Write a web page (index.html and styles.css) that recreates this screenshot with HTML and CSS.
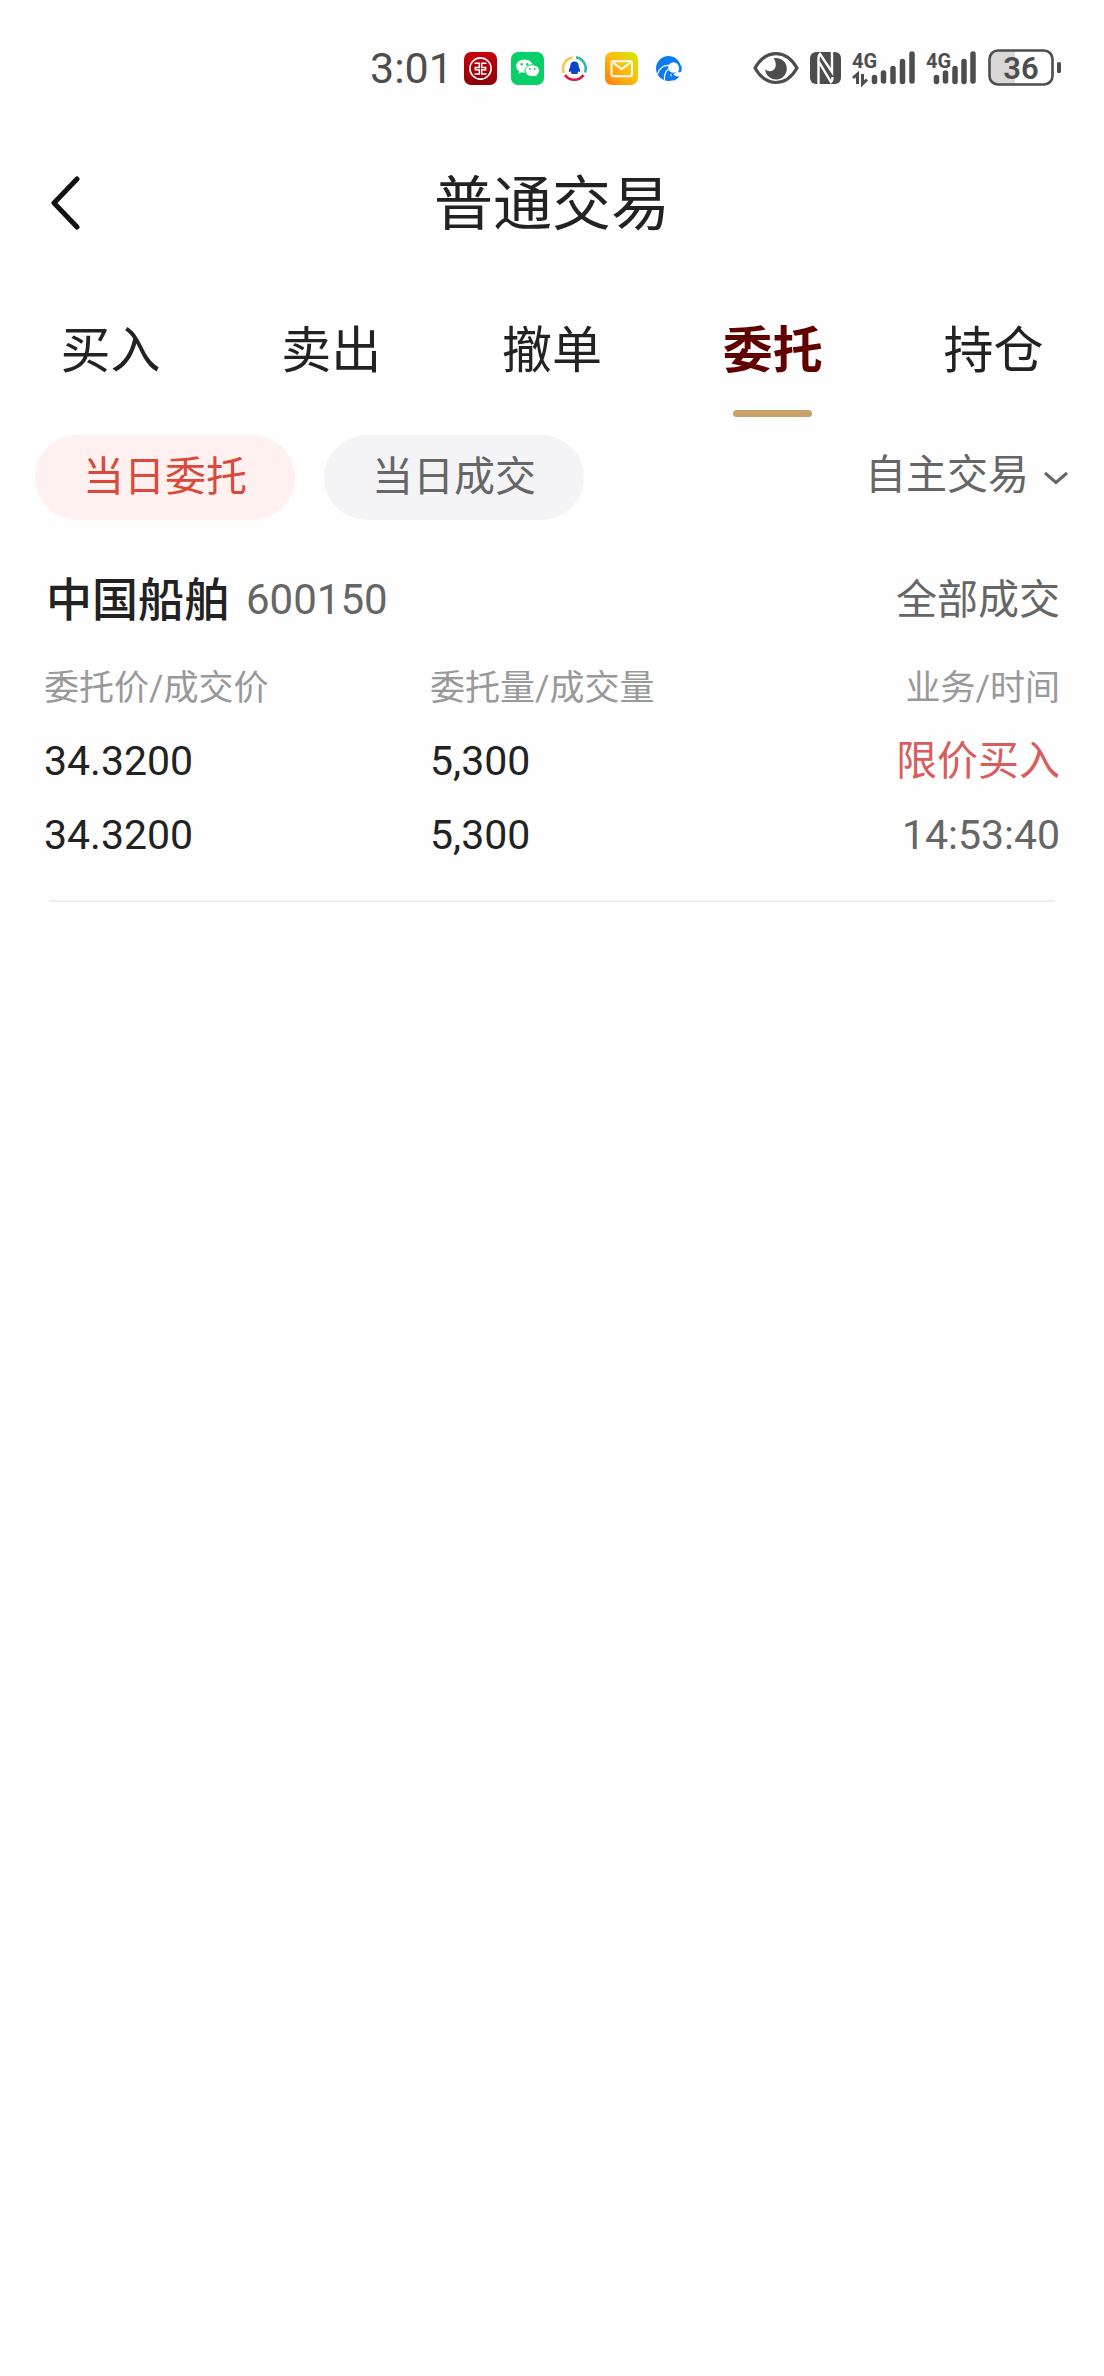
FILE: index.html
```html
<!DOCTYPE html>
<html lang="zh-CN">
<head>
<meta charset="utf-8">
<meta name="viewport" content="width=device-width, initial-scale=1">
<title>普通交易</title>
<link rel="stylesheet" href="styles.css">
</head>
<body>
<div class="status">
  <div class="status-left">
    <time class="clock">3:01</time>
    <svg class="app" viewBox="0 0 33 33" aria-hidden="true">
      <defs><linearGradient id="red" x1="0" y1="0" x2="0" y2="1"><stop offset="0" stop-color="#c8000c"/><stop offset="1" stop-color="#8c0008"/></linearGradient></defs>
      <rect width="33" height="33" rx="7" fill="url(#red)"/>
      <circle cx="16.500" cy="16.500" r="10.600" fill="none" stroke="#fff" stroke-width="1.600"/>
      <path d="M10.500 11.200h4.800v4.200h-4v2.400h4v4.200h-4.800M22.500 11.200h-4.800v4.200h4v2.400h-4v4.200h4.800" fill="none" stroke="#fff" stroke-width="1.500"/>
    </svg>
    <svg class="app" viewBox="0 0 33 33" aria-hidden="true">
      <rect width="33" height="33" rx="7" fill="#08cf68"/>
      <path d="M13.500 7.500c-4.600 0-8.300 2.900-8.300 6.600 0 2.100 1.200 3.900 3 5.100l-.8 2.600 3-1.500c1 .3 2 .4 3.100.4 4.600 0 8.300-2.900 8.300-6.600s-3.700-6.600-8.300-6.600z" fill="#fff"/>
      <path d="M21.300 12.800c-4 0-7.200 2.600-7.200 5.900s3.200 5.900 7.200 5.900c.9 0 1.800-.1 2.600-.4l2.400 1.300-.6-2.200c1.700-1.100 2.800-2.700 2.800-4.600 0-3.300-3.200-5.900-7.200-5.900z" fill="#fff" stroke="#08cf68" stroke-width="1"/>
      <g fill="#08cf68"><circle cx="10.800" cy="12.200" r="1.200"/><circle cx="16.300" cy="12.200" r="1.200"/><circle cx="18.900" cy="17" r="1"/><circle cx="23.700" cy="17" r="1"/></g>
    </svg>
    <svg class="app" viewBox="0 0 33 33" aria-hidden="true">
      <g fill="none" stroke-width="2.600">
        <path d="M5.800 21A11.300 11.300 0 0 1 14.500 5.600" stroke="#f5c94c"/>
        <path d="M18 5.400A11.300 11.300 0 0 1 27 20.500" stroke="#35b8a4"/>
        <path d="M25.500 23A11.300 11.300 0 0 1 7 23" stroke="#dc1648"/>
      </g>
      <path d="M16.500 9.500c-2.800 0-4.200 1.900-4.200 4.500 0 1.600-1.700 3.200-1.500 5.400.1 1 .9.600 1.500-.4.300 1 .7 1.500 1.300 2-.6.400-.4 1.100.9 1.100h4c1.300 0 1.500-.7.900-1.100.6-.5 1-1 1.300-2 .6 1 1.400 1.400 1.500.4.200-2.200-1.500-3.800-1.500-5.400 0-2.600-1.400-4.500-4.200-4.500z" fill="#0b46c4"/>
    </svg>
    <svg class="app" viewBox="0 0 33 33" aria-hidden="true">
      <defs><linearGradient id="mail" x1="1" y1="0" x2="0" y2="1"><stop offset="0" stop-color="#d6ea00"/><stop offset=".5" stop-color="#fdbb10"/><stop offset="1" stop-color="#ff7a0e"/></linearGradient></defs>
      <rect width="33" height="33" rx="7" fill="url(#mail)"/>
      <rect x="6.500" y="9.300" width="20.500" height="15" rx="2" fill="none" stroke="#fff" stroke-width="2"/>
      <path d="M8.500 11l8.200 6 8.200-6" fill="none" stroke="#fff" stroke-width="2"/>
    </svg>
    <svg class="app" viewBox="0 0 33 33" aria-hidden="true">
      <circle cx="16.500" cy="16.500" r="12.500" fill="#0a7cf0"/>
      <path d="M18 22c2 5 6 7 11 7l3-13-6-2c1 5-3 9-8 8z" fill="#fefefe"/>
      <circle cx="21.500" cy="15.500" r="5.300" fill="#fefefe"/>
      <path d="M20 20.500c2.500 4 5.500 4.500 7.500 3.500-2 3-4 4.300-6.500 4.800-1.500-2.800-2-5-1-8.300z" fill="#0a7cf0"/>
      <path d="M26.500 14c1 2 1 4-.5 6 1.500.6 2.500.2 3.300-.6.500-2 .6-4 .2-5.900z" fill="#0a7cf0"/>
      <path d="M17.500 13.500C12 13 7.500 16.500 5.500 22M16.500 17c-3.500 3-4.500 7-4 11.500" fill="none" stroke="#fefefe" stroke-width="1.200"/>
    </svg>
  </div>
  <div class="status-right">
    <svg width="46" height="34" viewBox="0 0 46 34" aria-hidden="true">
      <path d="M2 17C13-2.300 33-2.300 44 17 33 36.300 13 36.300 2 17z" fill="none" stroke="#4d4d4d" stroke-width="3.200" stroke-linejoin="round"/>
      <path d="M20.500 7.200a10.800 10.800 0 1 1-8.300 10.800c2 2.400 5.500 3 8.200 1 3.300-2.400 3.100-8 .1-11.800z" fill="#4d4d4d"/>
    </svg>
    <svg width="31" height="32" viewBox="0 0 31 32" aria-hidden="true">
      <rect width="31" height="32" rx="6" fill="#4d4d4d"/>
      <path d="M8.500 32V7c0-3 0-4 1.500-5l12 18V0M9 10l12 20c1.500-1 1.500-2 1.500-5" fill="none" stroke="#fefefe" stroke-width="2.400"/>
    </svg>
    <svg class="signal" width="63" height="34" viewBox="0 0 63 34" aria-hidden="true">
      <text class="net" x="0" y="17">4G</text>
      <path d="M5.500 33V23l-4.500 4M10.500 23v10l4.500-4.500" fill="none" stroke="#4d4d4d" stroke-width="3"/>
      <path d="M22.500 26.500v4M31.500 22v8M41 17.500v13M50.500 10.500v20M60 3v27" stroke="#4d4d4d" stroke-width="5.500" stroke-linecap="round"/>
    </svg>
    <svg class="signal" width="51" height="34" viewBox="0 0 51 34" aria-hidden="true">
      <text class="net" x="0" y="17">4G</text>
      <path d="M10.500 26.500v4M19.500 22v8M29 17.500v13M38 10.500v20M47 3v27" stroke="#4d4d4d" stroke-width="5.500" stroke-linecap="round"/>
    </svg>
    <svg width="74" height="38" viewBox="0 0 74 38" role="img" aria-label="电量 36%">
      <path d="M10 2h17v34H10a8 8 0 0 1-8-8V10a8 8 0 0 1 8-8z" fill="#d8d8d8"/>
      <rect x="1.500" y="1.500" width="63" height="34" rx="8.500" fill="none" stroke="#4d4d4d" stroke-width="2.600"/>
      <rect x="69" y="13" width="4" height="11" rx="1.500" fill="#4d4d4d"/>
      <text class="charge" x="33" y="30" text-anchor="middle">36</text>
    </svg>
  </div>
</div>

<header class="header">
  <button class="back" type="button" aria-label="返回">
    <svg width="32" height="56" viewBox="0 0 32 56" aria-hidden="true"><path d="M29 4L6 28l23 24" fill="none" stroke="#111" stroke-width="5" stroke-linecap="round" stroke-linejoin="round"/></svg>
  </button>
  <h1 class="title">普通交易</h1>
</header>

<nav class="tabs">
  <a class="tab" href="#buy">买入</a>
  <a class="tab" href="#sell">卖出</a>
  <a class="tab" href="#cancel">撤单</a>
  <a class="tab tab-active" href="#orders" aria-current="page">委托</a>
  <a class="tab" href="#holdings">持仓</a>
</nav>

<div class="filters">
  <button class="pill pill-active" type="button">当日委托</button>
  <button class="pill" type="button">当日成交</button>
  <label class="mode">
    <select class="mode-select" aria-label="交易类型"><option>自主交易</option></select>
    <svg width="26" height="14" viewBox="0 0 26 14" aria-hidden="true"><path d="M2 2l11 9.500L24 2" fill="none" stroke="#666" stroke-width="3"/></svg>
  </label>
</div>

<main class="orders">
  <article class="order">
    <div class="order-head">
      <h2 class="stock">中国船舶</h2>
      <span class="code">600150</span>
      <span class="state">全部成交</span>
    </div>
    <table class="detail">
      <thead><tr><th>委托价/成交价</th><th>委托量/成交量</th><th>业务/时间</th></tr></thead>
      <tbody>
        <tr><td>34.3200</td><td>5,300</td><td class="side">限价买入</td></tr>
        <tr><td>34.3200</td><td>5,300</td><td class="when">14:53:40</td></tr>
      </tbody>
    </table>
  </article>
</main>
</body>
</html>
```
FILE: styles.css
```css
* {
  box-sizing: border-box;
}

body {
  margin: 0;
  background: #fefefe;
  color: #222;
  font-family: Roboto, "Noto Sans CJK SC", sans-serif;
  font-size: 41px;
}

button,
select {
  border: 0;
  padding: 0;
  background: none;
  color: inherit;
  font: inherit;
}

.status {
  display: flex;
  justify-content: space-between;
  height: 136px;
  padding: 0 42px 0 370px;
}

.status-left,
.status-right {
  display: flex;
  align-items: center;
}

.status-left {
  gap: 14px;
}

.status-right {
  gap: 11px;
}

.clock {
  width: 80px;
  color: #4d4d4d;
  font-size: 43px;
}

.app {
  width: 33px;
  height: 33px;
}

.signal {
  overflow: visible;
}

.net {
  fill: #4d4d4d;
  font-size: 20px;
  font-weight: 700;
}

.charge {
  fill: #4d4d4d;
  font-size: 31px;
  font-weight: 600;
}

.header {
  display: grid;
  grid-template-columns: 1fr auto 1fr;
  align-items: center;
  height: 134px;
  padding: 0 48px;
}

.back {
  display: flex;
  justify-self: start;
}

.title {
  margin: 0;
  padding-top: 4px;
  font-size: 59px;
  font-weight: 400;
  line-height: 80px;
}

.tabs {
  display: grid;
  grid-template-columns: repeat(5, 1fr);
  margin-top: 22px;
}

.tab {
  display: flex;
  flex-direction: column;
  align-items: center;
  color: #222;
  font-size: 50px;
  line-height: 118px;
  text-decoration: none;
}

.tab-active {
  color: #600000;
  font-weight: 700;
}

.tab-active::after {
  content: "";
  width: 79px;
  height: 7px;
  border-radius: 4px;
  background: #c8a06a;
}

.filters {
  display: flex;
  align-items: center;
  gap: 29px;
  margin-top: 18px;
  padding: 0 35px;
}

.pill {
  width: 260px;
  height: 85px;
  padding-bottom: 10px;
  border-radius: 43px;
  background: #f4f4f7;
  color: #666;
}

.pill-active {
  background: #fef1ef;
  color: #d94a3d;
}

.mode {
  display: flex;
  align-items: center;
  gap: 14px;
  margin-left: auto;
  color: #666;
}

.mode-select {
  appearance: none;
  height: 80px;
  padding-bottom: 6px;
}

.orders {
  padding: 50px 44px 0;
}

.order-head {
  display: flex;
  align-items: center;
  gap: 16px;
  padding-left: 2px;
  line-height: 60px;
}

.stock {
  margin: 0;
  font-size: 46px;
  font-weight: 500;
}

.code,
.state {
  color: #666;
}

.code {
  font-size: 42px;
}

.state {
  margin-left: auto;
}

.detail {
  width: 100%;
  margin-top: 22px;
  border-collapse: collapse;
  table-layout: fixed;
}

.detail th,
.detail td {
  width: 38%;
  height: 74px;
  padding: 0;
  line-height: 60px;
  text-align: left;
}

.detail td {
  padding-bottom: 4px;
}

.detail th {
  color: #999;
  font-size: 35px;
  font-weight: 400;
}

.detail th:last-child,
.detail td:last-child {
  width: 24%;
  text-align: right;
}

.detail .side {
  color: #d95c5c;
}

.detail .when {
  color: #666;
}

.order::after {
  content: "";
  display: block;
  margin: 26px 5px 0;
  border-bottom: 2px solid #eee;
}
```
